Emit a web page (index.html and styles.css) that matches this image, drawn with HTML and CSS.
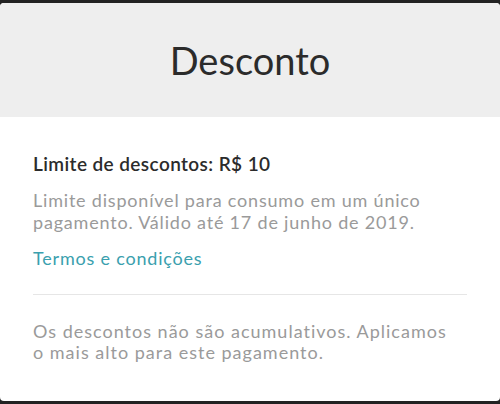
FILE: index.html
```html
<!DOCTYPE html>
<html lang="pt-BR">
<head>
<meta charset="utf-8">
<link rel="stylesheet" href="styles.css">
</head>
<body>
<div class="screen">
  <div class="card">
    <header class="card-header">
      <h1 class="title">Desconto</h1>
    </header>
    <section class="card-body">
      <h2 class="limit">Limite de descontos: R$ 10</h2>
      <p class="desc">Limite disponível para consumo em um único pagamento. Válido até 17 de junho de 2019.</p>
      <a class="terms" href="#">Termos e condições</a>
      <hr class="divider">
      <p class="note">Os descontos não são acumulativos. Aplicamos o mais alto para este pagamento.</p>
    </section>
  </div>
</div>
</body>
</html>
```

FILE: styles.css
```css
html, body {
  margin: 0;
  padding: 0;
  background: #222;
}
.screen {
  width: 500px;
  height: 404px;
  padding: 3px 0 3px;
  box-sizing: border-box;
  display: flex;
}
.card {
  flex: 1;
  background: #fff;
  border-radius: 4px;
  overflow: hidden;
  display: flex;
  flex-direction: column;
  font-family: Lato, "Open Sans", sans-serif;
}
.card-header {
  height: 114px;
  background: #eeeeee;
  display: flex;
  align-items: center;
  justify-content: center;
}
.title {
  margin: 0;
  font-size: 38px;
  font-weight: 400;
  color: #2b2b2b;
}
.card-body {
  padding: 35px 33px 0;
}
.limit {
  margin: 0;
  font-size: 19px;
  font-weight: 600;
  letter-spacing: 0.4px;
  color: #2b2b2b;
  line-height: 24px;
}
.desc {
  margin: 13px 0 0;
  font-size: 18px;
  letter-spacing: 0.8px;
  line-height: 22px;
  color: #9a9a9a;
}
.terms {
  display: block;
  margin-top: 14px;
  font-size: 18px;
  letter-spacing: 0.8px;
  line-height: 22px;
  color: #3aa0ae;
  text-decoration: none;
}
.divider {
  margin: 25px 0 0;
  border: 0;
  border-top: 1px solid #e6e6e6;
}
.note {
  margin: 26px 0 0;
  max-width: 425px;
  font-size: 18px;
  letter-spacing: 1px;
  line-height: 21px;
  color: #9a9a9a;
}
```
